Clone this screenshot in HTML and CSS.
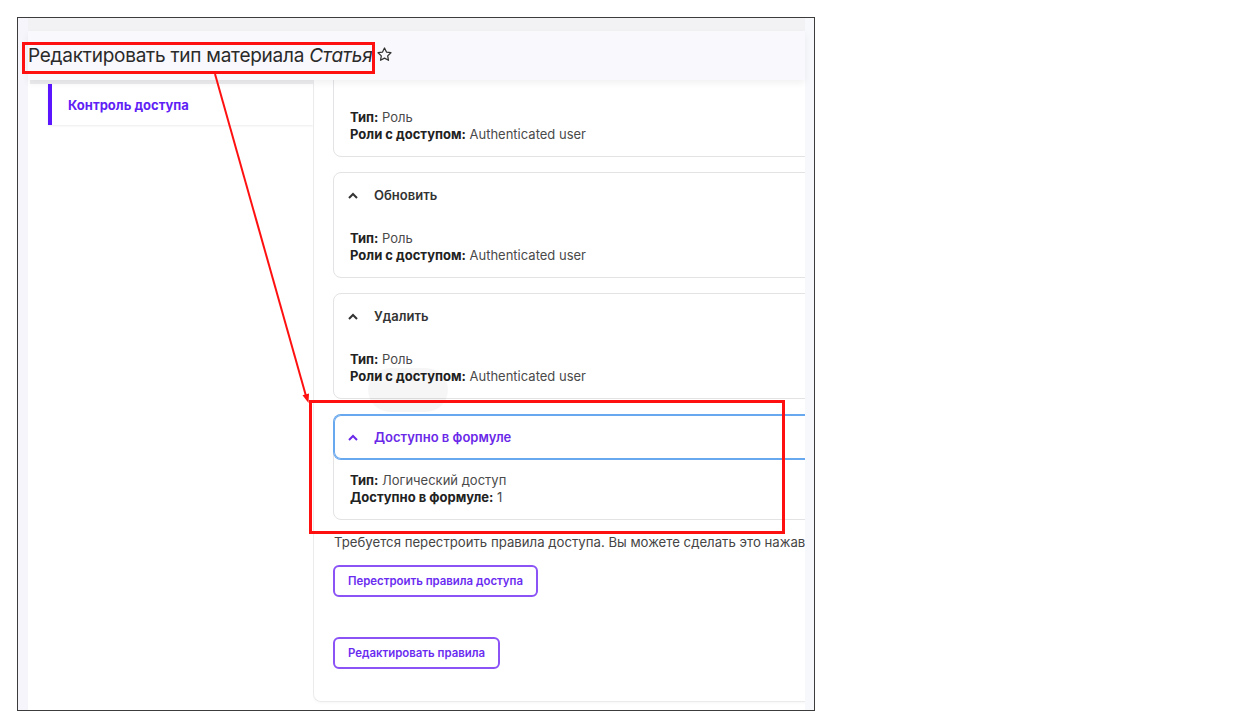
FILE: index.html
```html
<!DOCTYPE html>
<html lang="ru">
<head>
<meta charset="utf-8">
<title>Редактировать тип материала Статья</title>
<link rel="stylesheet" href="styles.css">
</head>
<body>
<div class="shot">
  <div class="strip-left"></div>
  <div class="page">
    <div class="topband"></div>
    <header class="head">
      <h1 class="title">Редактировать тип материала <em>Статья</em></h1>
      <svg class="star" width="17" height="17" viewBox="0 0 24 24" fill="none" stroke="#333" stroke-width="1.8" stroke-linejoin="round"><path d="M12 2.8l2.8 5.8 6.3.9-4.6 4.4 1.1 6.3L12 17.2l-5.6 3 1.1-6.3L2.9 9.5l6.3-.9z"/></svg>
    </header>
    <div class="content">
      <aside class="side">
        <div class="side-top"></div>
        <a class="side-item">Контроль доступа</a>
      </aside>
      <main class="main">
        <div class="panel">
          <section class="card card-first">
            <div class="card-body">
              <div><b>Тип:</b> Роль</div>
              <div><b>Роли с доступом:</b> Authenticated user</div>
            </div>
          </section>
          <section class="card">
            <div class="card-head"><svg class="chev" width="10" height="7" viewBox="0 0 10 7"><path d="M1 6L5 2L9 6" fill="none" stroke="currentColor" stroke-width="2"/></svg><span>Обновить</span></div>
            <div class="card-body">
              <div><b>Тип:</b> Роль</div>
              <div><b>Роли с доступом:</b> Authenticated user</div>
            </div>
          </section>
          <section class="card">
            <div class="card-head"><svg class="chev" width="10" height="7" viewBox="0 0 10 7"><path d="M1 6L5 2L9 6" fill="none" stroke="currentColor" stroke-width="2"/></svg><span>Удалить</span></div>
            <div class="card-body">
              <div><b>Тип:</b> Роль</div>
              <div><b>Роли с доступом:</b> Authenticated user</div>
            </div>
          </section>
          <section class="card card-active">
            <div class="card-head"><svg class="chev" width="10" height="7" viewBox="0 0 10 7"><path d="M1 6L5 2L9 6" fill="none" stroke="currentColor" stroke-width="2"/></svg><span>Доступно в формуле</span></div>
            <div class="card-body">
              <div><b>Тип:</b> Логический доступ</div>
              <div><b>Доступно в формуле:</b> 1</div>
            </div>
          </section>
          <p class="note">Требуется перестроить правила доступа. Вы можете сделать это нажав</p>
          <button class="btn">Перестроить правила доступа</button>
          <button class="btn btn-second">Редактировать правила</button>
          <div class="ripple"></div>
        </div>
      </main>
    </div>
  </div>
  <div class="strip-right"></div>
</div>
<svg class="annot" width="1247" height="722" viewBox="0 0 1247 722">
  <rect x="23.5" y="43.5" width="350" height="29" fill="none" stroke="#ff1010" stroke-width="3"/>
  <line x1="215" y1="74" x2="306" y2="396" stroke="#ff1010" stroke-width="2"/>
  <polygon points="308.5,403 309,393.5 302.5,395.3" fill="#ff1010"/>
  <rect x="310.5" y="401.5" width="473" height="131" fill="none" stroke="#ff1010" stroke-width="3"/>
</svg>
</body>
</html>
```
FILE: styles.css
```css
* { box-sizing: border-box; }
html, body { margin: 0; padding: 0; }
body {
  background: #ffffff;
  font-family: Inter, "Noto Sans", "Liberation Sans", sans-serif;
  color: #333;
  width: 1247px;
  height: 722px;
  position: relative;
  overflow: hidden;
}
.shot {
  margin: 17px 0 0 17px;
  width: 798px;
  height: 694px;
  border: 1px solid #3c3c3c;
  display: flex;
  overflow: hidden;
}
.strip-left { width: 10px; background: #f6f5fc; flex: none; }
.strip-right { width: 9px; background: #f7f8fb; flex: none; }
.page {
  width: 777px;
  flex: none;
  display: flex;
  flex-direction: column;
  background: #fff;
}
.topband { height: 13px; background: #f2f2f4; flex: none; }
.head {
  height: 49px;
  flex: none;
  background: #f9f8fd;
  display: flex;
  align-items: center;
  position: relative;
  z-index: 2;
  box-shadow: 0 3px 7px rgba(0, 0, 0, 0.06);
}
.title {
  margin: 0;
  font-family: Inter, "Noto Sans", sans-serif;
  font-size: 19px;
  letter-spacing: -0.25px;
  font-weight: 400;
  color: #2a2a2a;
  white-space: nowrap;
}
.title em { font-style: italic; }
.star { margin-left: 4px; margin-top: -2px; }
.content { flex: 1; display: flex; min-height: 0; }
.side { width: 285px; flex: none; display: flex; flex-direction: column; }
.side-top { height: 4px; background: #ededf0; margin-left: 2px; }
.side-item {
  margin-left: 20px;
  height: 41px;
  display: flex;
  align-items: center;
  padding-left: 16px;
  border-left: 4px solid #5b16ff;
  font-size: 13px;
  font-weight: 700;
  color: #5f1ff5;
  box-shadow: 0 1px 2px rgba(0, 0, 0, 0.08);
}
.main {
  width: 492px;
  flex: none;
  overflow: hidden;
  padding-bottom: 8px;
}
.panel {
  display: flow-root;
  height: 100%;
  border-left: 1px solid #ebebee;
  border-bottom: 1px solid #ebebee;
  border-bottom-left-radius: 8px;
  box-shadow: 0 1px 3px rgba(0, 0, 0, 0.04);
  padding-left: 19px;
  position: relative;
  width: 520px;
}
.card {
  border: 1px solid #e3e3e6;
  border-radius: 8px;
  margin-bottom: 15px;
  background: #fff;
}
.card-first { margin-top: -10px; }
.card-first .card-body { padding-top: 38px; }
.card-head {
  height: 44px;
  display: flex;
  align-items: center;
  padding-left: 14px;
  font-size: 13px;
  font-weight: 600;
  color: #333;
  border-radius: 7px;
}
.chev { margin-right: 16px; color: #333; }
.card-body {
  padding: 13px 16px 13px;
  font-size: 13px;
  line-height: 17px;
  color: #4a4a4a;
}
.card-body b { color: #222; font-weight: 700; }
.card-active .card-head {
  color: #6a28e8;
  box-shadow: 0 0 0 1px #68a8ef, inset 0 0 0 1px #68a8ef;
}
.card-active .chev { color: #6a28e8; }
.note {
  margin: -1px 0 14px 1px;
  font-size: 13.2px;
  line-height: 17px;
  color: #454545;
  white-space: nowrap;
}
.btn {
  display: block;
  height: 32px;
  padding: 0 13px;
  border: 2px solid #8b52f6;
  border-radius: 6px;
  background: #fff;
  font-family: Inter, "Noto Sans", sans-serif;
  font-size: 11.4px;
  font-weight: 600;
  color: #6a2cf0;
}
.btn-second { margin-top: 40px; }
.ripple {
  position: absolute;
  left: 54px;
  top: 288px;
  width: 80px;
  height: 44px;
  border-radius: 22px;
  background: rgba(0, 0, 0, 0.035);
}
.annot { position: absolute; left: 0; top: 0; z-index: 10; pointer-events: none; }
```
